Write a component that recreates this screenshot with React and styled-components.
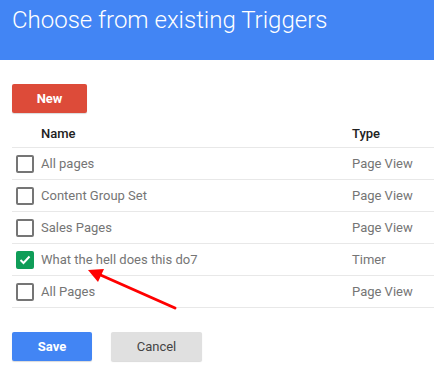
import React from 'react'
import styled, { createGlobalStyle } from "styled-components";

const Global = createGlobalStyle`
    body {
        margin: 0;
        background: #fff;
        font-family: Roboto, "Liberation Sans", sans-serif;
    }
`
const Page = styled.div`
    position: relative;
    width: 434px;
    height: 371px;
    overflow: hidden;
`
const Header = styled.header`
    height: 60px;
    background-color: #4285f4;
    padding: 5px 0 0 12px;
    box-sizing: border-box;
`
const Title = styled.h1`
    margin: 0;
    font-size: 24px;
    font-weight: 300;
    line-height: 30px;
    color: #fff;
`
const Body = styled.section`
    padding: 24px 0 0 12px;
`
const Button = styled.button`
    height: 29px;
    width: ${p => p.w}px;
    border: none;
    border-radius: 2px;
    font-family: Roboto, "Liberation Sans", sans-serif;
    font-size: 13px;
    font-weight: ${p => p.$plain ? 400 : 700};
    color: ${p => p.$plain ? '#444' : '#fff'};
    background-color: ${p => p.bg};
    box-shadow: 0 1px 1px rgba(0,0,0,0.15);
    padding: 0;
`
const Row = styled.div`
    display: grid;
    grid-template-columns: 29px 311px 1fr;
    align-items: center;
    height: ${p => p.$head ? 35 : 32}px;
    box-sizing: border-box;
    border-bottom: 1px solid #e8e8e8;
    font-size: 13px;
    color: ${p => p.$head ? '#212121' : '#757575'};
    font-weight: ${p => p.$head ? 500 : 400};
    padding-top: ${p => p.$head ? 6 : 0}px;
`
const Box = styled.span`
    width: 18px;
    height: 18px;
    box-sizing: border-box;
    margin-left: 4px;
    border-radius: 2px;
    border: 2px solid ${p => p.$on ? '#0f9d58' : '#757575'};
    background: ${p => p.$on ? '#0f9d58' : 'transparent'};
    display: flex;
    align-items: center;
    justify-content: center;
`
const Actions = styled.div`
    display: flex;
    gap: 19px;
    margin-top: 24px;
`
const Arrow = styled.svg`
    position: absolute;
    left: 0;
    top: 0;
    pointer-events: none;
`

const rows = [
    { name: 'All pages', type: 'Page View' },
    { name: 'Content Group Set', type: 'Page View' },
    { name: 'Sales Pages', type: 'Page View' },
    { name: 'What the hell does this do7', type: 'Timer', on: true },
    { name: 'All Pages', type: 'Page View' },
]

const App = () => {
    return(
        <Page>
            <Global/>
            <Header>
                <Title>Choose from existing Triggers</Title>
            </Header>
            <Body>
                <Button w={75} bg="#dd4b39">New</Button>
                <div>
                    <Row $head>
                        <span/>
                        <span>Name</span>
                        <span>Type</span>
                    </Row>
                    {rows.map((r, i) => (
                        <Row key={i}>
                            <Box $on={r.on}>
                                {r.on && (
                                    <svg width="12" height="10" viewBox="0 0 12 10">
                                        <path d="M1.5 5 L4.5 8 L10.5 1.5" fill="none" stroke="#fff" strokeWidth="2"/>
                                    </svg>
                                )}
                            </Box>
                            <span>{r.name}</span>
                            <span>{r.type}</span>
                        </Row>
                    ))}
                </div>
                <Actions>
                    <Button w={80} bg="#4285f4">Save</Button>
                    <Button w={91} bg="#e0e0e0" $plain>Cancel</Button>
                </Actions>
            </Body>
            <Arrow width="434" height="371">
                <line x1="175" y1="308" x2="96" y2="273" stroke="#f00" strokeWidth="3" strokeLinecap="round"/>
                <polygon points="88,270 104,269 98,282" fill="#f00"/>
            </Arrow>
        </Page>
    )
}

export default App
